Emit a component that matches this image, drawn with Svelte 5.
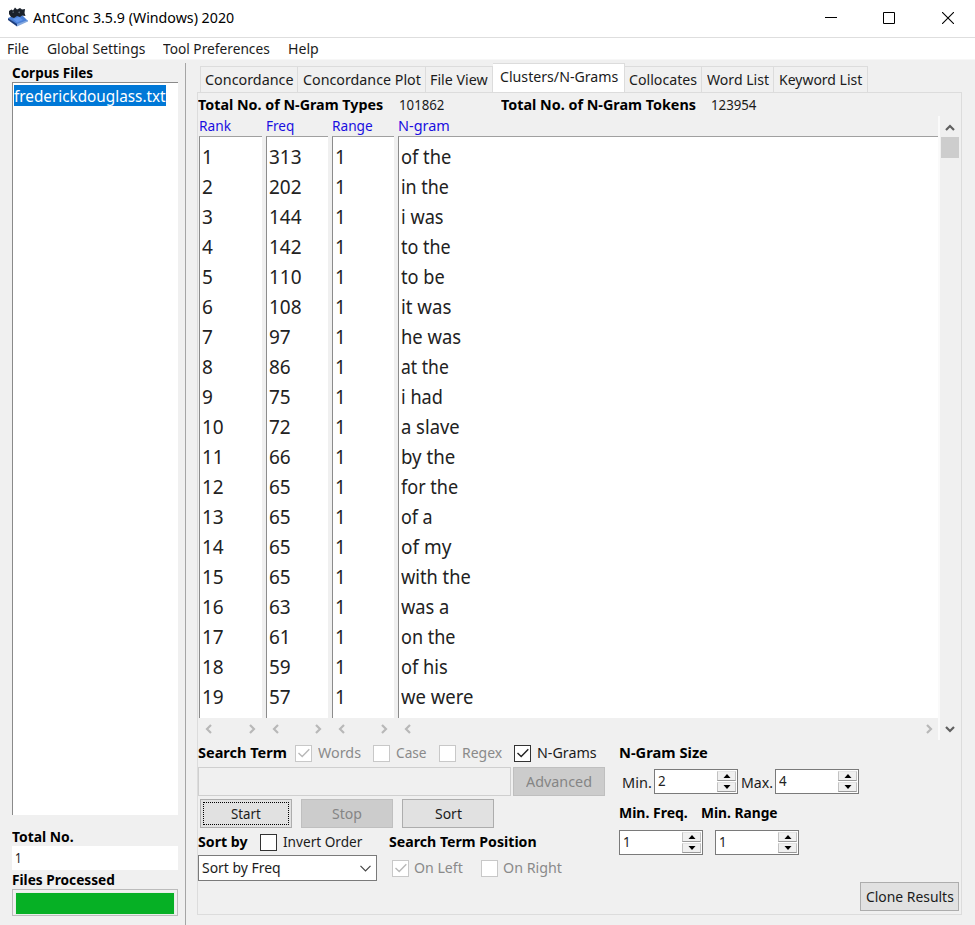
<script>
  const rows = [
    [313, 'of the', 50], [202, 'in the', 48], [144, 'i was', 43], [142, 'to the', 50], [110, 'to be', 44],
    [108, 'it was', 50], [97, 'he was', 60], [86, 'at the', 48], [75, 'i had', 42], [72, 'a slave', 59],
    [66, 'by the', 54], [65, 'for the', 57], [65, 'of a', 32], [65, 'of my', 50], [65, 'with the', 70],
    [63, 'was a', 48], [61, 'on the', 55], [59, 'of his', 47], [57, 'we were', 72]
  ];
  const digits = (n) => String(n).length * 11;
  const columns = [
    { head: 'Rank', hw: 32, cls: 'narrow', cells: rows.map((_, i) => [i + 1, digits(i + 1)]) },
    { head: 'Freq', hw: 28, cls: 'narrow', cells: rows.map((r) => [r[0], digits(r[0])]) },
    { head: 'Range', hw: 41, cls: 'narrow', cells: rows.map(() => [1, 11]) },
    { head: 'N-gram', hw: 52, cls: 'wide', cells: rows.map((r) => [r[1], r[2]]) }
  ];
  const tabs = [
    ['Concordance', 89, 98], ['Concordance Plot', 118, 128], ['File View', 58, 67],
    ['Clusters/N-Grams', 118, 132], ['Collocates', 68, 77], ['Word List', 62, 72], ['Keyword List', 83, 94]
  ];
  const menus = [['File', 22], ['Global Settings', 98], ['Tool Preferences', 107], ['Help', 31]];

  // Squeezes a label horizontally to its allotted width.
  function fit(node, width) {
    const natural = node.offsetWidth;
    if (natural) node.style.transform = `scaleX(${width / natural})`;
  }
</script>

{#snippet txt(s, w)}
  <span class="t" style:width={w + 'px'}><span class="inner" use:fit={w}>{s}</span></span>
{/snippet}

{#snippet check(on, dim)}
  <span class="cb" class:dim>
    {#if on}<svg width="14" height="14" viewBox="0 0 14 14"><path d="M1.5 7 L5.2 10.5 L12.3 3.2" fill="none" stroke="currentColor" stroke-width="1.4" /></svg>{/if}
  </span>
{/snippet}

{#snippet chev(d, cls)}
  <svg class={cls} width="10" height="10" viewBox="0 0 10 10"><path {d} fill="none" stroke="currentColor" stroke-width="2.2" /></svg>
{/snippet}

{#snippet spin(v)}
  <span class="spin">
    <span class="val">{@render txt(v, 8)}</span>
    <span class="arrows">
      <i><svg width="8" height="4" viewBox="0 0 8 4"><path d="M4 0L7.5 4H.5Z" /></svg></i>
      <i><svg width="8" height="4" viewBox="0 0 8 4"><path d="M.5 0H7.5L4 4Z" /></svg></i>
    </span>
  </span>
{/snippet}

<div class="window">
  <header class="title">
    <svg class="logo" width="20" height="20" viewBox="0 0 20 20">
      <path d="M0 11L12 6L20 14L9 18Z" fill="#4a7fd6" />
      <path d="M0 11L9 17L9 19.5L0 13Z" fill="#1b3c7c" />
      <path d="M9 17L20 13V14.5L9 19.5Z" fill="#86a9de" />
      <path d="M1 4L3.5 2.5L5 3.5L7 .5L9 2.5L12 1L14 2.5L17 2L16.5 6L17.5 9L14 8.5L12 10L9 9L6 11L3 10L1 7Z" fill="#1a212b" />
      <path d="M4 5L6 4.5L5.5 6Z M10 5L12 4.5L11.5 6.5Z" fill="#71808f" />
      <path d="M5 12L11 10L15 13L9 15.5Z" fill="#6196ec" />
    </svg>
    {@render txt('AntConc 3.5.9 (Windows) 2020', 201)}
    <div class="controls">
      <svg class="mini" width="12" height="12" viewBox="0 0 12 12"><path d="M0 5.5H12" stroke="#000" /></svg>
      <svg width="12" height="12" viewBox="0 0 12 12"><path d="M.5 .5H11.5V11.5H.5Z" fill="none" stroke="#000" /></svg>
      <svg width="12" height="12" viewBox="0 0 12 12"><path d="M0 0L12 12M12 0L0 12" stroke="#000" stroke-width="1.1" /></svg>
    </div>
  </header>
  <nav class="menu">
    {#each menus as m}{@render txt(m[0], m[1])}{/each}
  </nav>
  <div class="body">
    <aside>
      <div class="b l1">{@render txt('Corpus Files', 81)}</div>
      <div class="files"><div class="sel">{@render txt('frederickdouglass.txt', 152)}</div></div>
      <div class="b l2">{@render txt('Total No.', 62)}</div>
      <div class="total">{@render txt('1', 7)}</div>
      <div class="b l3">{@render txt('Files Processed', 103)}</div>
      <div class="progress"><div></div></div>
    </aside>
    <main>
      <div class="tabs">
        {#each tabs as t, i}
          <div class="tab" class:active={i === 3} style:width={t[2] + 'px'}>{@render txt(t[0], t[1])}</div>
        {/each}
      </div>
      <section class="panel">
        <div class="totals">
          <b>{@render txt('Total No. of N-Gram Types', 185)}</b>
          <span class="n1">{@render txt('101862', 45)}</span>
          <b class="tk">{@render txt('Total No. of N-Gram Tokens', 195)}</b>
          <span class="n2">{@render txt('123954', 45)}</span>
        </div>
        <div class="grid">
          {#each columns as c}
            <div class="col {c.cls}">
              <div class="head">{@render txt(c.head, c.hw)}</div>
              <div class="list">
                {#each c.cells as cell}<div class="cell">{@render txt(cell[0], cell[1])}</div>{/each}
              </div>
              <div class="hs">
                {@render chev('M7 1L3 5L7 9', '')}
                {@render chev('M3 1L7 5L3 9', '')}
              </div>
            </div>
          {/each}
          <div class="vs">
            {@render chev('M1 7L5 3L9 7', 'up')}
            <div class="thumb"></div>
            {@render chev('M1 3L5 7L9 3', 'down')}
          </div>
        </div>
        <div class="lower">
          <div class="left">
            <div class="row r1">
              <b>{@render txt('Search Term', 89)}</b>
              <label class="dimt c1">{@render check(true, true)}{@render txt('Words', 43)}</label>
              <label class="dimt c2">{@render check(false, true)}{@render txt('Case', 31)}</label>
              <label class="dimt c3">{@render check(false, true)}{@render txt('Regex', 40)}</label>
              <label class="c4">{@render check(true, false)}{@render txt('N-Grams', 60)}</label>
            </div>
            <div class="row r2">
              <div class="entry"></div>
              <div class="btn off adv">{@render txt('Advanced', 66)}</div>
            </div>
            <div class="row r3">
              <div class="btn focus">{@render txt('Start', 30)}</div>
              <div class="btn off">{@render txt('Stop', 30)}</div>
              <div class="btn">{@render txt('Sort', 27)}</div>
            </div>
            <div class="row r4">
              <b>{@render txt('Sort by', 50)}</b>
              <label class="inv">{@render check(false, false)}{@render txt('Invert Order', 79)}</label>
              <b class="stp">{@render txt('Search Term Position', 148)}</b>
            </div>
            <div class="row r5">
              <div class="combo">
                {@render txt('Sort by Freq', 79)}
                <svg width="11" height="7" viewBox="0 0 11 7"><path d="M.5 .8L5.5 5.8L10.5 .8" fill="none" stroke="#444" stroke-width="1.2" /></svg>
              </div>
              <label class="dimt c5">{@render check(true, true)}{@render txt('On Left', 49)}</label>
              <label class="dimt c6">{@render check(false, true)}{@render txt('On Right', 59)}</label>
            </div>
          </div>
          <div class="right">
            <div class="row r1"><b>{@render txt('N-Gram Size', 89)}</b></div>
            <div class="row q2">
              <span class="min">{@render txt('Min.', 30)}</span>{@render spin('2')}
              <span class="max">{@render txt('Max.', 32)}</span>{@render spin('4')}
            </div>
            <div class="row q3">
              <b>{@render txt('Min. Freq.', 69)}</b><b class="mr">{@render txt('Min. Range', 77)}</b>
            </div>
            <div class="row q4">{@render spin('1')}{@render spin('1')}</div>
            <div class="btn clone">{@render txt('Clone Results', 88)}</div>
          </div>
        </div>
      </section>
    </main>
  </div>
</div>

<style>
  :global(body) { margin: 0; background: #f0f0f0; }
  .window, .window :global(*) { box-sizing: border-box; }
  .window {
    width: 975px; height: 925px; display: flex; flex-direction: column; overflow: hidden;
    background: #f0f0f0; color: #1b1b1b; font: 15px/20px "Noto Sans", "Open Sans", sans-serif;
  }
  svg { display: block; flex: none; }
  b { font-weight: 700; color: #000; display: flex; }
  .t { display: block; flex: none; white-space: nowrap; height: 20px; }
  .inner { display: block; width: max-content; line-height: 18px; transform-origin: 0 50%; }

  .title { height: 38px; flex: none; background: #fff; border-bottom: 1px solid #dedede; display: flex; align-items: center; padding: 0 21px 2px 8px; color: #000; }
  .logo { margin: 0 5px 2px 0; }
  .controls { margin-left: auto; display: flex; gap: 47px; }
  .mini { margin-right: -1px; }
  .menu { height: 22px; flex: none; background: #fff; border-bottom: 1px solid #f7f7f7; display: flex; align-items: center; gap: 18px; padding-left: 7px; }
  .body { flex: 1; display: flex; min-height: 0; padding-top: 3px; }

  aside { width: 186px; flex: none; border-right: 1px solid #a5a5a5; padding-left: 12px; }
  .b { font-weight: 700; color: #000; height: 19px; display: flex; align-items: center; }
  .files { width: 166px; height: 733px; background: #fff; border: 1px solid #8a8a8a; border-right: 0; border-bottom: 0; padding: 2px 0 0 1px; }
  .sel { background: #0078d7; color: #fff; width: 152px; height: 21px; font-size: 16px; display: flex; align-items: center; padding-top: 2px; }
  .l2 { margin-top: 12px; }
  .total { width: 166px; height: 24px; background: #fff; padding: 2px 0 0 3px; }
  .progress { width: 166px; height: 27px; border: 1px solid #bcbcbc; background: #f0f0f0; padding: 2px; }
  .progress div { height: 23px; background: #06b025; border: 1px solid #e8efe8; }

  main { flex: 1; padding-left: 11px; }
  .tabs { height: 29px; display: flex; align-items: flex-end; padding-left: 3px; }
  .tab { height: 26px; border: 1px solid #dcdcdc; border-left-width: 0; border-bottom: 0; display: flex; align-items: center; justify-content: center; }
  .tab:first-child { border-left-width: 1px; }
  .tab.active { height: 29px; background: #fff; padding-bottom: 2px; }
  .panel { width: 765px; height: 823px; border: 1px solid #dcdcdc; display: flex; flex-direction: column; }
  .totals { height: 23px; display: flex; align-items: center; }
  .n1 { margin-left: 16px; display: flex; }
  .n2 { margin-left: 15px; display: flex; }
  .tk { margin-left: 57px; }
  .grid { height: 624px; display: flex; padding-left: 1px; }
  .col { display: flex; flex-direction: column; }
  .narrow { width: 62px; margin-right: 4px; }
  .narrow:first-child { width: 63px; }
  .wide { width: 540px; }
  .head { height: 20px; color: #1a0fe0; display: flex; align-items: center; }
  .narrow:not(:first-child) .head { padding-left: 0; }
  .list { height: 582px; background: #fff; border-left: 1px solid #8c8c8c; border-top: 1px solid #a0a0a0; padding: 6px 0 0 2px; }
  .cell { height: 30px; display: flex; align-items: center; font-size: 19px; color: #222; }
  .hs { height: 22px; display: flex; align-items: center; justify-content: space-between; color: #b8b8b8; padding: 0 5px 1px; }
  .wide .hs { padding-right: 4px; }
  .vs { width: 22px; border-left: 2px solid #fafafa; display: flex; flex-direction: column; align-items: center; color: #606060; }
  .vs :global(.up) { margin: 7px 0 4px; }
  .thumb { width: 18px; height: 21px; background: #cdcdcd; }
  .vs :global(.down) { margin-top: auto; margin-bottom: 6px; }

  .lower { display: flex; height: 174px; }
  .left { width: 421px; }
  .right { flex: 1; display: flex; flex-direction: column; }
  .row { display: flex; align-items: center; }
  label { display: flex; align-items: center; gap: 6px; }
  .dimt { color: #8a8a8a; }
  .cb { width: 17px; height: 17px; border: 1px solid #333; background: #fff; color: #222; display: flex; align-items: center; justify-content: center; flex: none; }
  .cb.dim { border-color: #c8c8c8; color: #b8b8b8; }
  .r1 { height: 27px; padding-bottom: 1px; }
  .c1 { margin-left: 8px; }
  .c2 { margin-left: 12px; }
  .c3 { margin-left: 12px; }
  .c4 { margin-left: 12px; }
  .r2 { height: 29px; }
  .entry { width: 313px; height: 29px; border: 1px solid #cfcfcf; }
  .btn { height: 29px; width: 92px; border: 1px solid #adadad; background: #e1e1e1; display: flex; align-items: center; justify-content: center; flex: none; }
  .off { background: #cccccc; border-color: #bfbfbf; color: #858585; }
  .adv { margin-left: 2px; }
  .r3 { height: 29px; margin-top: 3px; padding-left: 2px; gap: 9px; }
  .focus { outline: 1px dotted #000; outline-offset: -4px; }
  .r4 { height: 28px; }
  .inv { margin-left: 12px; }
  .stp { margin-left: 27px; }
  .r5 { height: 26px; margin-top: -1px; }
  .combo { width: 179px; height: 26px; border: 1px solid #7a7a7a; background: #fff; display: flex; align-items: center; justify-content: space-between; padding: 0 5px 0 3px; }
  .c5 { margin-left: 15px; gap: 5px; }
  .c6 { margin-left: 18px; gap: 5px; }
  .q2 { height: 29px; padding-left: 3px; }
  .min { margin: 3px 2px 0 0; display: flex; }
  .max { margin: 3px 2px 0 3px; display: flex; }
  .q3 { height: 28px; margin-top: 3px; }
  .mr { margin-left: 13px; }
  .q4 { height: 30px; gap: 12px; }
  .spin { width: 84px; height: 25px; border: 1px solid #7a7a7a; background: #fff; display: flex; justify-content: space-between; padding: 1px 1px 1px 3px; flex: none; }
  .val { color: #222; }
  .arrows { display: flex; flex-direction: column; gap: 1px; }
  .arrows i { width: 19px; height: 10px; background: #f0f0f0; border: 1px solid #c2c2c2; border-top-color: #e4e4e4; border-bottom-color: #999; display: flex; align-items: center; justify-content: center; }
  .clone { width: 99px; height: 29px; margin: auto 2px 3px auto; }
</style>
